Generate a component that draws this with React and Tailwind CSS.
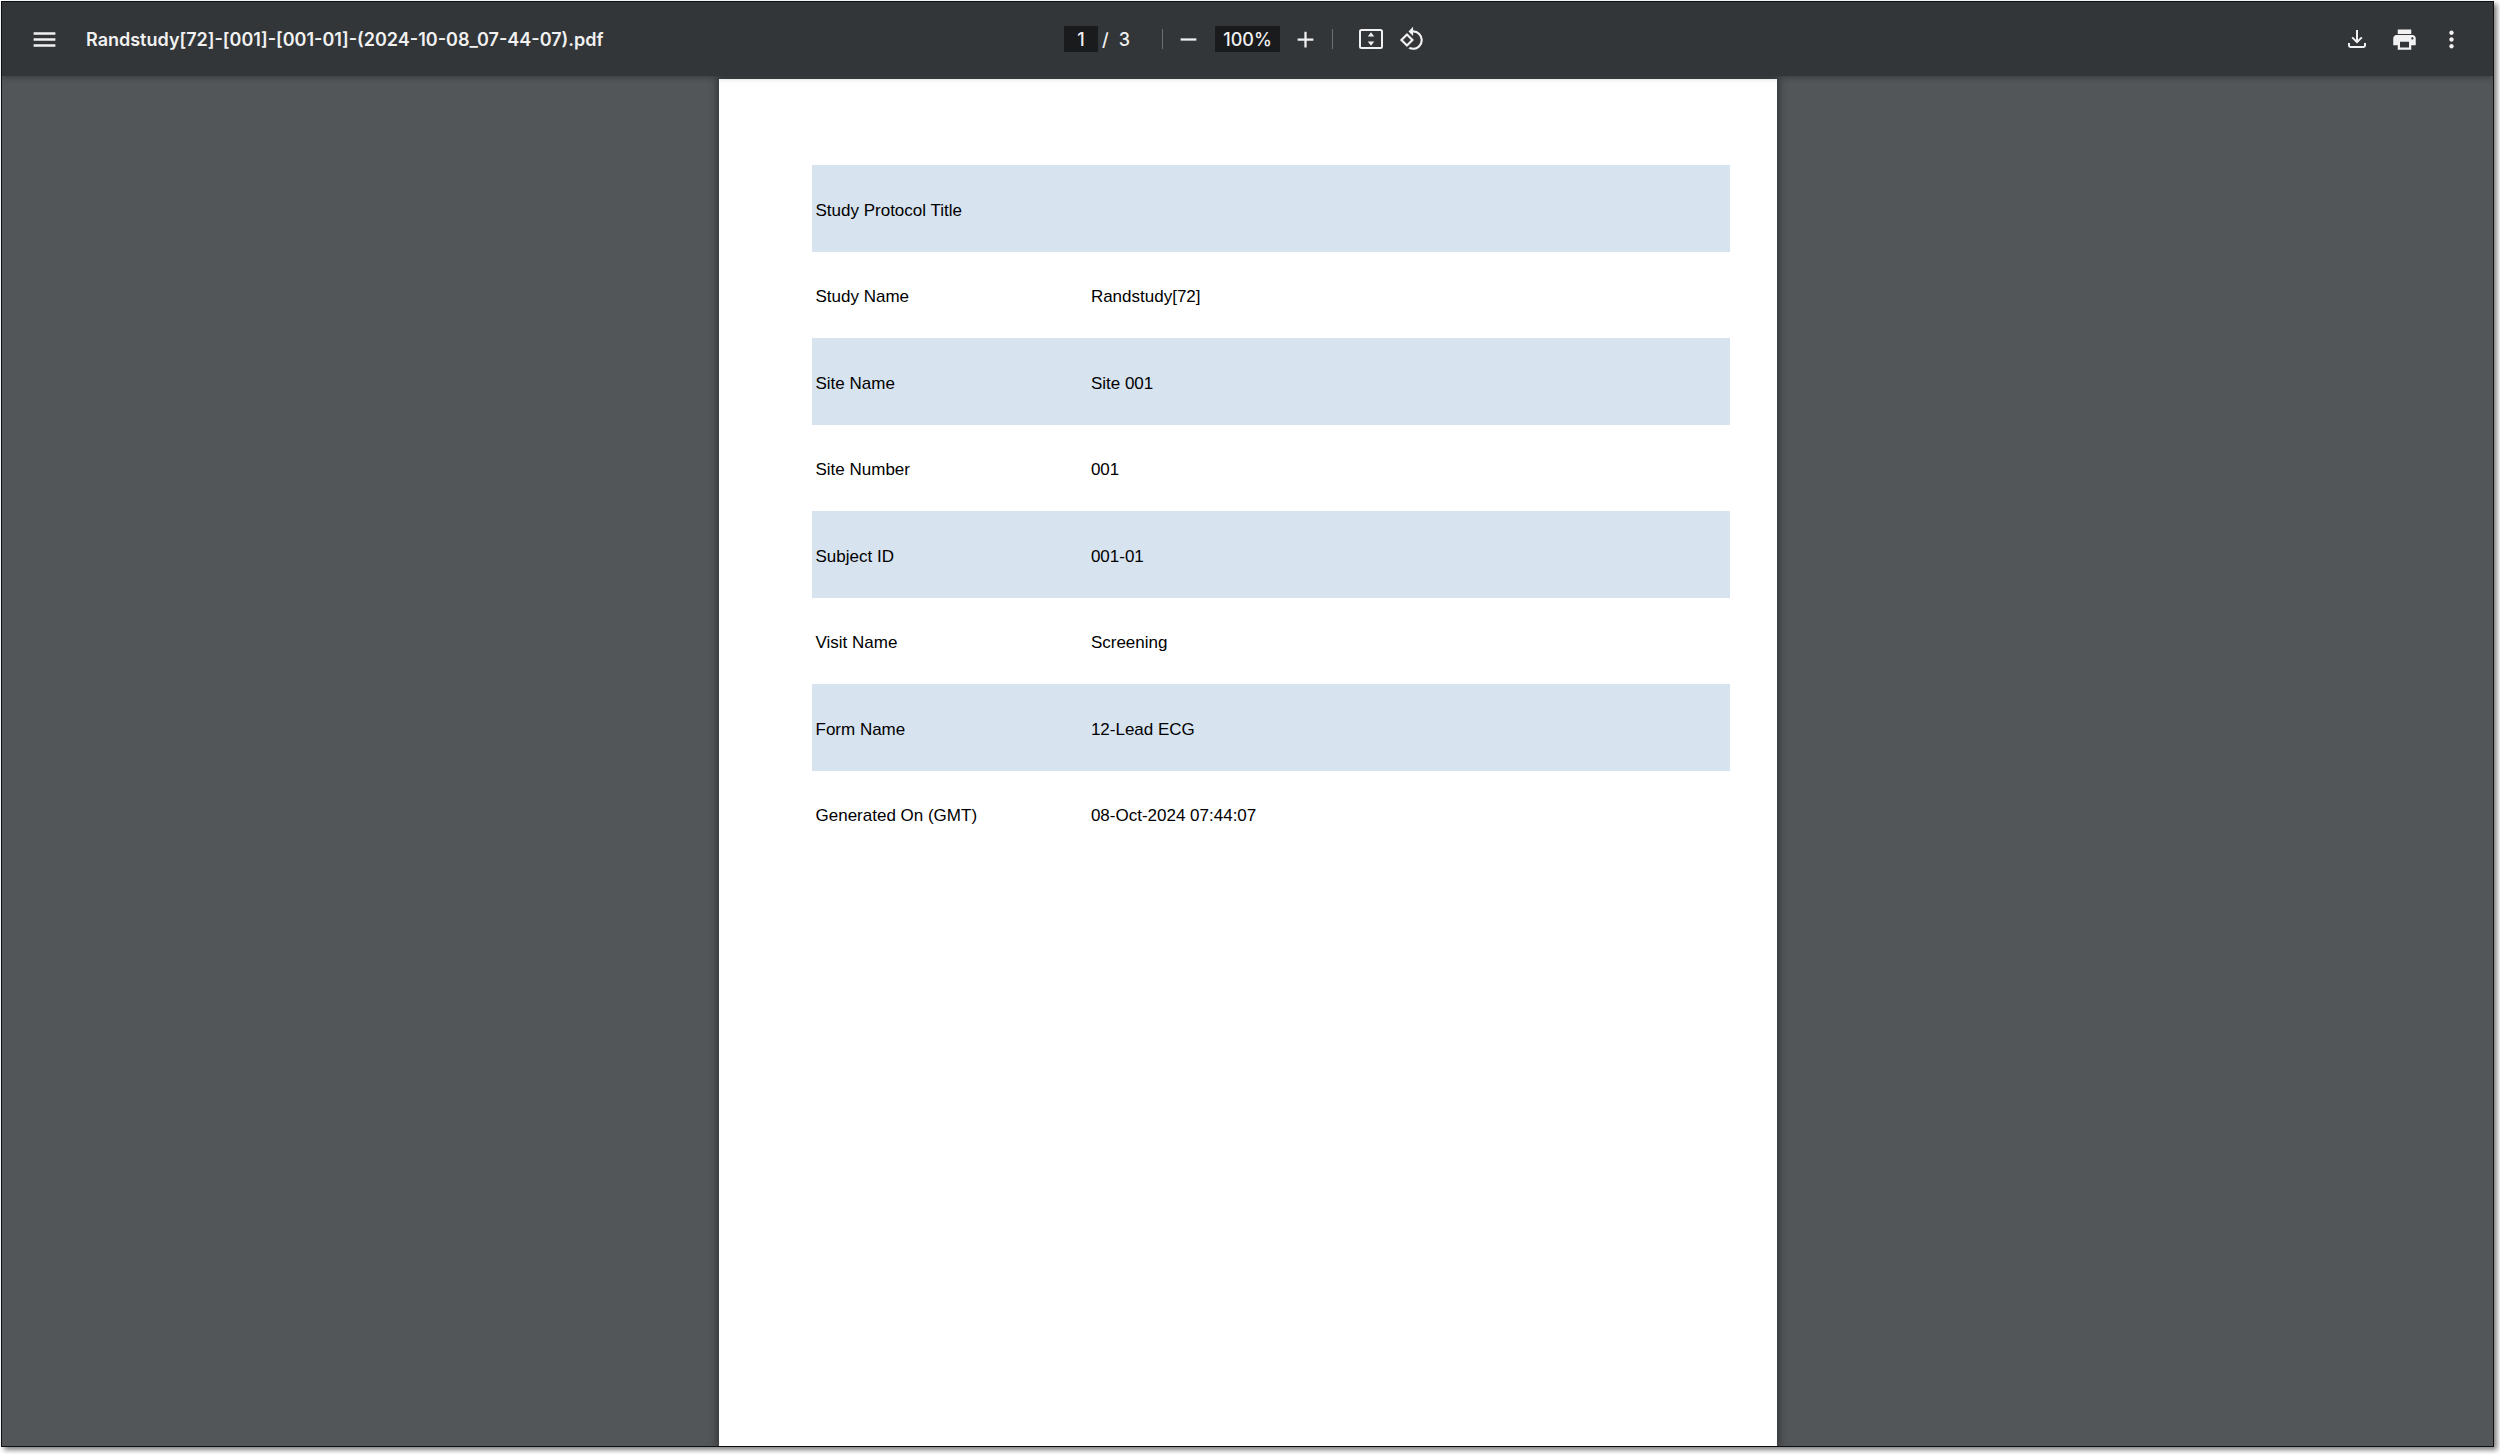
import React from 'react';
import { MdAdd, MdMenu, MdMoreVert, MdPrint, MdRemove, MdRotate90DegreesCcw } from 'react-icons/md';

const rows = [
  { label: 'Study Protocol Title', value: '' },
  { label: 'Study Name', value: 'Randstudy[72]' },
  { label: 'Site Name', value: 'Site 001' },
  { label: 'Site Number', value: '001' },
  { label: 'Subject ID', value: '001-01' },
  { label: 'Visit Name', value: 'Screening' },
  { label: 'Form Name', value: '12-Lead ECG' },
  { label: 'Generated On (GMT)', value: '08-Oct-2024 07:44:07' },
];

function FitPageIcon() {
  return (
    <svg viewBox="0 0 24 20" className="w-6 h-5" fill="none" aria-hidden="true">
      <rect x="1" y="1" width="22" height="18" rx="1.5" stroke="currentColor" strokeWidth="2" />
      <path d="M12 3.200l3.200 4.400H8.800zM12 16.800l-3.200-4.400h6.400z" fill="currentColor" />
    </svg>
  );
}

function DownloadIcon() {
  return (
    <svg viewBox="0 0 18 18" className="w-[18px] h-[18px]" fill="none" stroke="currentColor" strokeWidth="2" aria-hidden="true">
      <path d="M9 0v12M4.2 7.4L9 12.2l4.8-4.8M1 13v2.6Q1 17 2.4 17h13.2q1.4 0 1.4-1.4V13" />
    </svg>
  );
}

function IconButton({ label, className = 'w-11', children }) {
  return (
    <button type="button" aria-label={label} className={`${className} h-11 shrink-0 flex items-center justify-center`}>
      {children}
    </button>
  );
}

function Divider({ className = '' }) {
  return <div className={`w-px h-5 bg-[#6b6e70] ${className}`} />;
}

function Toolbar() {
  return (
    <header className="relative z-10 h-[74px] shrink-0 flex items-center bg-[#323639] text-[#f1f1f1] shadow-[0_1px_6px_rgba(0,0,0,0.35)] font-['Inter',sans-serif] font-medium text-[18px]">
      <div className="flex-1 flex items-center pl-5">
        <IconButton label="Menu">
          <MdMenu className="w-[29px] h-[29px]" />
        </IconButton>
        <h1 className="ml-5 font-semibold whitespace-nowrap">
          Randstudy[72]-[001]-[001-01]-(2024-10-08_07-44-07).pdf
        </h1>
      </div>

      <div className="flex items-center">
        <input
          aria-label="Page number"
          defaultValue="1"
          className="w-[34px] h-[26px] bg-[#191b1c] text-center"
        />
        <span className="ml-1">/</span>
        <span className="ml-2.5">3</span>
        <Divider className="ml-8 mr-1" />
        <IconButton label="Zoom out">
          <MdRemove className="w-[27px] h-[27px]" />
        </IconButton>
        <input
          aria-label="Zoom level"
          defaultValue="100%"
          className="ml-1 mr-1 w-[65px] h-[26px] bg-[#191b1c] text-center"
        />
        <IconButton label="Zoom in">
          <MdAdd className="w-[27px] h-[27px]" />
        </IconButton>
        <Divider className="ml-1 mr-4" />
        <IconButton label="Fit to page">
          <FitPageIcon />
        </IconButton>
        <IconButton label="Rotate counterclockwise" className="w-[38px]">
          <MdRotate90DegreesCcw className="w-[26px] h-[26px]" />
        </IconButton>
      </div>

      <div className="flex-1 flex items-center justify-end gap-[3px] pr-5">
        <IconButton label="Download">
          <DownloadIcon />
        </IconButton>
        <IconButton label="Print">
          <MdPrint className="w-[27px] h-[27px]" />
        </IconButton>
        <IconButton label="More actions">
          <MdMoreVert className="w-[27px] h-[27px]" />
        </IconButton>
      </div>
    </header>
  );
}

function DocumentPage() {
  return (
    <main className="w-full max-w-[1058px] mx-auto mt-[3px] flex-1 bg-white shadow-[0_0_8px_2px_rgba(0,0,0,0.4)] pt-[86px] pl-[93px] pr-[47px] font-['Liberation_Sans',Arial,sans-serif] text-[17px] text-black">
      <table className="w-full table-fixed text-left">
        <tbody>
          {rows.map((row) => (
            <tr key={row.label} className="h-[86px] odd:h-[87px] odd:bg-[#d7e3ef]">
              <th scope="row" className="w-[30%] px-1 pt-1 font-normal">{row.label}</th>
              <td className="px-1 pt-1">{row.value}</td>
            </tr>
          ))}
        </tbody>
      </table>
    </main>
  );
}

export default function App() {
  return (
    <div className="h-screen bg-white pt-px pl-px pr-[6px] pb-[7px] overflow-hidden">
      <div className="h-full border border-[#0e0f10] shadow-[3px_3px_5px_rgba(0,0,0,0.5)]">
        <div className="h-full flex flex-col overflow-hidden bg-[#525659]">
          <Toolbar />
          <DocumentPage />
        </div>
      </div>
    </div>
  );
}
